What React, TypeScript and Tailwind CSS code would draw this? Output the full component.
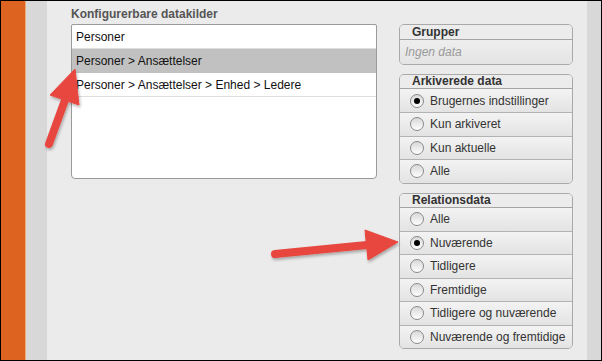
import React from "react";

const font = { fontFamily: '"Liberation Sans", Arial, sans-serif' };

const sources = [
  "Personer",
  "Personer > Ansættelser",
  "Personer > Ansættelser > Enhed > Ledere",
];

function Radio({ checked }: { checked?: boolean }) {
  return (
    <span className="w-[14px] h-[14px] rounded-full border border-[#8a8a8a] bg-gradient-to-b from-[#d8d8d8] to-white flex items-center justify-center shrink-0">
      {checked && <span className="w-[6px] h-[6px] rounded-full bg-black" />}
    </span>
  );
}

function RadioGroup({ title, options, selected }: { title: string; options: string[]; selected: number }) {
  return (
    <div className="border border-[#a9a9a9] rounded-[5px] overflow-hidden">
      <div className="h-[14px] leading-[13px] pl-[12px] text-[12px] font-bold text-[#333] bg-[#ececec] border-b border-[#a4a4a4]">
        {title}
      </div>
      {options.map((o, i) => (
        <div
          key={o}
          className={`flex items-center pl-[10px] gap-[6px] text-[12px] text-[#333] bg-gradient-to-b from-[#f3f3f3] to-[#e3e3e3] ${i > 0 ? "h-[23.5px] border-t border-[#b2b2b2]" : "h-[23px]"}`}
        >
          <Radio checked={i === selected} />
          <span>{o}</span>
        </div>
      ))}
    </div>
  );
}

function Arrows() {
  return (
    <svg className="absolute inset-0 pointer-events-none" width={602} height={361}>
      <defs>
        <filter id="sh" x="-20%" y="-20%" width="140%" height="140%">
          <feDropShadow dx="1" dy="2" stdDeviation="1.5" floodColor="#000" floodOpacity="0.3" />
        </filter>
      </defs>
      <g fill="#e8473f" stroke="#e8473f" filter="url(#sh)">
        <line x1="48" y1="143" x2="64" y2="99" strokeWidth="8" strokeLinecap="round" />
        <polygon points="74,68 78,104 49,94" strokeWidth="1" strokeLinejoin="round" />
        <line x1="274" y1="253" x2="366" y2="244" strokeWidth="8" strokeLinecap="round" />
        <polygon points="397,241 367,259 364,229" strokeWidth="1" strokeLinejoin="round" />
      </g>
    </svg>
  );
}

export default function App() {
  return (
    <div className="relative w-[602px] h-[361px] border border-black flex overflow-hidden" style={font}>
      <div className="w-[25px] bg-[#dd6420] border-r border-[#f2a878]" />
      <div className="w-[21px] bg-[#d8d8d8]" />
      <div className="flex-1 bg-[#ebebeb] flex pl-[24px] pt-[5px] gap-[22px]">
        <div className="w-[306px]">
          <div className="text-[12px] font-bold text-[#555] leading-[16px] h-[18px]">Konfigurerbare datakilder</div>
          <div className="h-[155px] bg-white border border-[#9a9a9a] rounded-b-[4px] rounded-t-[2px] overflow-hidden">
            {sources.map((s, i) => (
              <div
                key={s}
                className={`h-[24px] flex items-center pl-[4px] text-[12px] text-[#111] border-b ${i === 1 ? "bg-[#c1c1c1] border-[#c1c1c1]" : "border-[#dedede]"}`}
              >
                {s}
              </div>
            ))}
          </div>
        </div>
        <div className="w-[174px] pt-[18px] flex flex-col gap-[9px]">
          <div className="border border-[#a9a9a9] rounded-[5px] overflow-hidden">
            <div className="h-[15px] leading-[14px] pl-[12px] text-[12px] font-bold text-[#333] bg-[#ececec] border-b border-[#a4a4a4]">
              Grupper
            </div>
            <div className="h-[24px] flex items-center pl-[5px] text-[12px] italic text-[#999] bg-gradient-to-b from-[#eeeeee] to-[#e4e4e4]">
              Ingen data
            </div>
          </div>
          <RadioGroup
            title="Arkiverede data"
            options={["Brugernes indstillinger", "Kun arkiveret", "Kun aktuelle", "Alle"]}
            selected={0}
          />
          <RadioGroup
            title="Relationsdata"
            options={["Alle", "Nuværende", "Tidligere", "Fremtidige", "Tidligere og nuværende", "Nuværende og fremtidige"]}
            selected={1}
          />
        </div>
      </div>
      <div className="w-[14px] bg-[#d8d8d8]" />
      <Arrows />
    </div>
  );
}
